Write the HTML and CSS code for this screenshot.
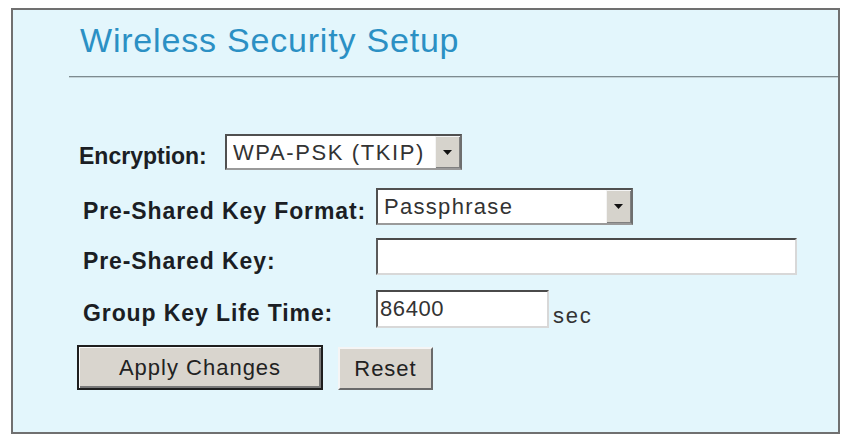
FILE: index.html
```html
<!DOCTYPE html>
<html lang="en">
<head>
<meta charset="utf-8">
<title>Wireless Security Setup</title>
<link rel="stylesheet" href="styles.css">
</head>
<body>
<div class="panel">
  <div class="header">
    <h1 class="title">Wireless Security Setup</h1>
  </div>
  <form class="form">
    <div class="row row-enc">
      <label class="label label-enc">Encryption:</label>
      <div class="combo combo-enc">
        <select class="combo-select"><option>WPA-PSK (TKIP)</option></select>
        <span class="combo-btn"><svg width="9" height="5" viewBox="0 0 9 5"><polygon points="0,0 9,0 4.5,5" fill="#111"/></svg></span>
      </div>
    </div>
    <div class="row row-format">
      <label class="label label-field">Pre-Shared Key Format:</label>
      <div class="combo combo-format">
        <select class="combo-select combo-select-format"><option>Passphrase</option></select>
        <span class="combo-btn"><svg width="9" height="5" viewBox="0 0 9 5"><polygon points="0,0 9,0 4.5,5" fill="#111"/></svg></span>
      </div>
    </div>
    <div class="row row-key">
      <label class="label label-field">Pre-Shared Key:</label>
      <input class="text-input input-key" type="text" value="">
    </div>
    <div class="row row-life">
      <label class="label label-field">Group Key Life Time:</label>
      <input class="text-input input-life" type="text" value="86400">
      <span class="unit">sec</span>
    </div>
    <div class="actions">
      <button type="button" class="btn btn-default btn-apply">Apply Changes</button>
      <button type="button" class="btn btn-reset">Reset</button>
    </div>
  </form>
</div>
</body>
</html>
```
FILE: styles.css
```css
body {
  margin: 0;
  background: #ffffff;
  font-family: "Liberation Sans", Arial, sans-serif;
}

.panel {
  box-sizing: border-box;
  width: 829px;
  height: 426px;
  margin: 8px 0 0 11px;
  border: 2px solid #707070;
  background: #e3f6fc;
}

.header {
  margin-left: 56px;
  padding-bottom: 16px;
  border-bottom: 1px solid #7d8b90;
  box-shadow: 0 1px 0 #c4d3d8;
}

.title {
  margin: 10px 0 0;
  padding-left: 11px;
  font-size: 34px;
  line-height: 40px;
  font-weight: normal;
  letter-spacing: 0.8px;
  color: #2b90c4;
}

.form {
  margin: 0;
  padding-left: 64px;
}

.row {
  display: flex;
  align-items: center;
}

.row-enc { margin-top: 57px; }
.row-format { margin-top: 18px; }
.row-key { margin-top: 13px; }
.row-life { margin-top: 15px; }

.label {
  box-sizing: border-box;
  padding-top: 8px;
  font-size: 23px;
  line-height: 24px;
  font-weight: bold;
  letter-spacing: 0.9px;
  color: #1b1e24;
}

.label-enc {
  width: 146px;
  margin-left: 2px;
  letter-spacing: 0;
}

.label-field {
  width: 293px;
  margin-left: 6px;
}

.combo {
  box-sizing: border-box;
  display: flex;
  border: 2px solid;
  border-color: #505050 #6e6e6e #9a9a9a #505050;
  background: #ffffff;
}

.combo-enc {
  width: 237px;
  height: 36px;
}

.combo-format {
  width: 257px;
  height: 37px;
}

.combo-select {
  flex: 1;
  min-width: 0;
  margin: 0;
  padding: 0 0 0 6px;
  border: 0;
  outline: none;
  background: transparent;
  -webkit-appearance: none;
  appearance: none;
  font-family: "Liberation Sans", Arial, sans-serif;
  font-size: 22px;
  letter-spacing: 1.6px;
  color: #333333;
}

.combo-select-format {
  letter-spacing: 1.3px;
}

.combo-btn {
  width: 25px;
  display: flex;
  align-items: center;
  justify-content: center;
  background: #d6d3cc;
  box-shadow: inset 1px 1px 0 #f4f4f4, inset -1px -1px 0 #808080;
}

.text-input {
  box-sizing: border-box;
  margin: 0;
  padding: 0 0 0 2px;
  border: 2px solid;
  border-color: #4a4a4a #d8d8d8 #d8d8d8 #5a5a5a;
  background: #ffffff;
  outline: none;
  font-family: "Liberation Sans", Arial, sans-serif;
  font-size: 22px;
  letter-spacing: 0.6px;
  color: #333333;
}

.input-key {
  width: 421px;
  height: 37px;
}

.input-life {
  width: 173px;
  height: 38px;
}

.unit {
  align-self: flex-end;
  margin-left: 4px;
  font-size: 22px;
  line-height: 24px;
  letter-spacing: 1.8px;
  color: #333333;
}

.actions {
  display: flex;
  align-items: flex-end;
  margin-top: 17px;
}

.btn {
  box-sizing: border-box;
  padding: 0;
  margin: 0;
  background: #d9d5ce;
  border: 2px solid;
  border-color: #f5f5f5 #6a6a6a #6a6a6a #f5f5f5;
  font-family: "Liberation Sans", Arial, sans-serif;
  font-size: 22px;
  letter-spacing: 1px;
  color: #222222;
}

.btn-default {
  border: 2px solid #1e1e1e;
  box-shadow: inset 1px 1px 0 #fafafa, inset -2px -2px 0 #7a7a7a;
}

.btn-apply {
  width: 246px;
  height: 45px;
}

.btn-reset {
  width: 95px;
  height: 43px;
  margin-left: 15px;
}
```
